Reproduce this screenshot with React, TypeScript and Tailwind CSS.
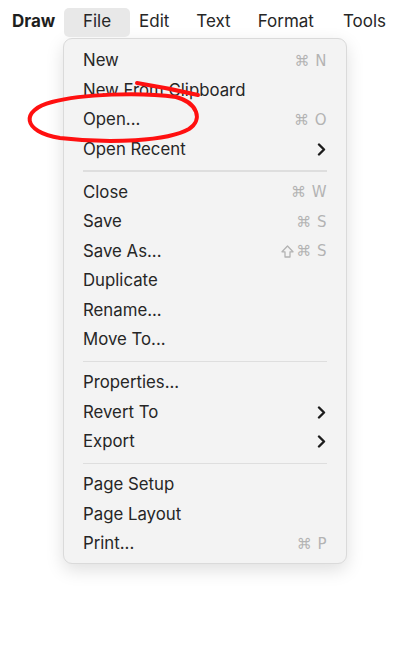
import React from 'react';

type Item = { label: string; shortcut?: string; shift?: boolean; submenu?: boolean } | 'sep';

const items: Item[] = [
  { label: 'New', shortcut: '⌘ N' },
  { label: 'New From Clipboard' },
  { label: 'Open...', shortcut: '⌘ O' },
  { label: 'Open Recent', submenu: true },
  'sep',
  { label: 'Close', shortcut: '⌘ W' },
  { label: 'Save', shortcut: '⌘ S' },
  { label: 'Save As...', shortcut: '⌘ S', shift: true },
  { label: 'Duplicate' },
  { label: 'Rename...' },
  { label: 'Move To...' },
  'sep',
  { label: 'Properties...' },
  { label: 'Revert To', submenu: true },
  { label: 'Export', submenu: true },
  'sep',
  { label: 'Page Setup' },
  { label: 'Page Layout' },
  { label: 'Print...', shortcut: '⌘ P' },
];

function Chevron() {
  return (
    <svg width="9" height="13" viewBox="0 0 9 13" className="mr-[1px]">
      <polyline points="2,1.5 7,6.5 2,11.5" fill="none" stroke="#1c1c1c" strokeWidth="2.4" strokeLinecap="round" strokeLinejoin="round" />
    </svg>
  );
}

function ShiftGlyph() {
  return (
    <svg width="13" height="13" viewBox="0 0 13 13" className="mr-[2px]">
      <path d="M6.5 1 L12 6.8 H9 V12 H4 V6.8 H1 Z" fill="none" stroke="#b3b3b3" strokeWidth="1.3" strokeLinejoin="round" />
    </svg>
  );
}

export default function App() {
  return (
    <div className="relative w-[400px] h-[650px] bg-white overflow-hidden font-['Inter','DejaVu_Sans',sans-serif] text-[#262626]">
      {/* menu bar */}
      <div className="flex items-center h-[40px] pt-[4px] text-[17px]">
        <span className="pl-[12px] w-[64px] font-bold text-[#1e1e1e]">Draw</span>
        <span className="w-[66px] h-[29px] rounded-[5px] bg-[#e8e8e8] flex items-center justify-center">File</span>
        <span className="ml-[9px]">Edit</span>
        <span className="ml-[27px]">Text</span>
        <span className="ml-[27px]">Format</span>
        <span className="ml-[29px]">Tools</span>
      </div>

      {/* dropdown */}
      <div className="ml-[63px] -mt-[2px] w-[284px] rounded-[9px] bg-[#f3f3f3] border border-[#dadada] shadow-[0_6px_18px_rgba(0,0,0,0.13)] pt-[7px] pb-[4px] px-[19px]">
        {items.map((it, i) =>
          it === 'sep' ? (
            <div key={i} className="h-[13.5px] flex items-center">
              <div className="w-full h-[1.5px] bg-[#dedede]" />
            </div>
          ) : (
            <div key={i} className="h-[29.5px] flex items-center justify-between text-[16.8px]">
              <span>{it.label}</span>
              {it.shortcut && (
                <span className="flex items-center text-[#b3b3b3] font-['DejaVu_Sans','Inter',sans-serif] text-[15px] tracking-[0.5px]">
                  {it.shift && <ShiftGlyph />}
                  {it.shortcut}
                </span>
              )}
              {it.submenu && <Chevron />}
            </div>
          )
        )}
      </div>

      {/* red annotation */}
      <svg className="absolute left-0 top-0 pointer-events-none" width="400" height="650">
        <path d="M137 83 Q168 88 198 95" fill="none" stroke="#ff1010" strokeWidth="4" strokeLinecap="round" />
        <path
          d="M176 97 C140 92 82 94 52 102 C20 110 22 132 60 138 C110 144 168 141 189 129 C203 120 198 103 176 97"
          fill="none" stroke="#ff1010" strokeWidth="4" strokeLinecap="round"
        />
      </svg>
    </div>
  );
}
